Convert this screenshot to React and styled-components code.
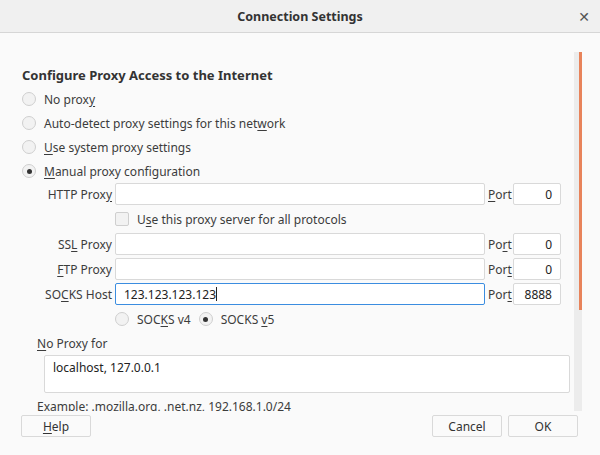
import React from "react";
import styled, { createGlobalStyle } from "styled-components";

const Global = createGlobalStyle`
  html, body { margin: 0; background: #fafafa; }
  body { font-family: "Noto Sans", "DejaVu Sans", sans-serif; font-size: 12px; color: #3c3c3c; }
`;

const Dialog = styled.div`
  width: 600px;
  height: 455px;
  display: flex;
  flex-direction: column;
  background: #fafafa;
`;

const TitleBar = styled.div`
  height: 32px;
  flex: none;
  display: flex;
  align-items: center;
  justify-content: center;
  background: #f0f0f0;
  border-bottom: 1px solid #d6d6d6;
  font-weight: bold;
  font-size: 12.5px;
  color: #333;
  position: relative;
`;

const Close = styled.span`
  position: absolute;
  right: 10px;
  top: 7px;
  font-size: 14px;
  color: #555;
`;

const Middle = styled.div`
  display: flex;
  height: 359px;
  flex: none;
  padding-top: 19px;
  overflow: hidden;
`;

const Content = styled.div`
  flex: 1;
  padding: 14px 0 0 22px;
`;

const Scrollbar = styled.div`
  width: 8px;
  margin-right: 18px;
  background: #ececec;
  display: flex;
  justify-content: flex-end;
`;

const Thumb = styled.div`
  width: 3px;
  height: 258px;
  background: #e8835a;
`;

const Heading = styled.div`
  font-weight: bold;
  font-size: 13px;
  line-height: 18px;
  color: #333;
  margin-bottom: 3px;
`;

const RadioRow = styled.label`
  display: flex;
  align-items: center;
  gap: 8px;
  height: 24px;
`;

const Radio = styled.span`
  width: 12px;
  height: 12px;
  border-radius: 50%;
  border: 1px solid #cfcfcf;
  background: #f2f2f2;
  display: flex;
  align-items: center;
  justify-content: center;
  flex: none;
  &::after {
    content: "";
    width: 5px;
    height: 5px;
    border-radius: 50%;
    background: ${(p) => (p.$on ? "#333" : "transparent")};
  }
`;

const Fields = styled.div`
  display: grid;
  grid-template-columns: 90px 370px 22px 48px;
  column-gap: 3px;
  row-gap: 3px;
  align-items: center;
`;

const Label = styled.span`
  text-align: right;
`;

const PortLabel = styled.span``;

const Input = styled.div`
  height: 20px;
  border: 1px solid ${(p) => (p.$focus ? "#3b8de0" : "#d9d9d9")};
  border-radius: 2px;
  background: #fff;
  padding: 0 8px;
  display: flex;
  align-items: center;
  justify-content: ${(p) => (p.$right ? "flex-end" : "flex-start")};
  color: #222;
  font-size: 12px;
`;

const Caret = styled.span`
  width: 1px;
  height: 14px;
  background: #222;
`;

const CheckRow = styled.div`
  grid-column: 2 / 5;
  display: flex;
  align-items: center;
  gap: 8px;
  height: 22px;
`;

const Check = styled.span`
  width: 12px;
  height: 12px;
  border: 1px solid #cfcfcf;
  background: #f2f2f2;
  border-radius: 2px;
`;

const SocksRow = styled.div`
  grid-column: 2 / 5;
  display: flex;
  align-items: center;
  gap: 8px;
  height: 22px;
`;

const Section = styled.div`
  padding-left: 15px;
  margin-top: 5px;
`;

const TextArea = styled.div`
  margin: 3px 0 0 7px;
  width: 508px;
  height: 30px;
  border: 1px solid #d9d9d9;
  border-radius: 2px;
  background: #fff;
  padding: 3px 8px;
  color: #222;
`;

const Hint = styled.div`
  margin-top: 5px;
`;

const Footer = styled.div`
  display: flex;
  padding: 4px 22px 0 21px;
  gap: 6px;
`;

const Button = styled.button`
  width: 70px;
  height: 22px;
  border: 1px solid #d9d9d9;
  border-radius: 2px;
  background: #fafafa;
  font: inherit;
  color: #333;
  margin-left: ${(p) => (p.$push ? "auto" : "0")};
`;

const U = styled.u`
  text-underline-offset: 2px;
`;

export default function App() {
  return (
    <Dialog>
      <Global />
      <TitleBar>
        Connection Settings
        <Close>✕</Close>
      </TitleBar>
      <Middle>
        <Content>
          <Heading>Configure Proxy Access to the Internet</Heading>
          <RadioRow><Radio /><span>No prox<U>y</U></span></RadioRow>
          <RadioRow><Radio /><span>Auto-detect proxy settings for this net<U>w</U>ork</span></RadioRow>
          <RadioRow><Radio /><span><U>U</U>se system proxy settings</span></RadioRow>
          <RadioRow><Radio $on /><span><U>M</U>anual proxy configuration</span></RadioRow>
          <Fields>
            <Label>HTTP Prox<U>y</U></Label>
            <Input />
            <PortLabel><U>P</U>ort</PortLabel>
            <Input $right>0</Input>
            <span />
            <CheckRow><Check /><span>U<U>s</U>e this proxy server for all protocols</span></CheckRow>
            <Label>SS<U>L</U> Proxy</Label>
            <Input />
            <PortLabel>Po<U>r</U>t</PortLabel>
            <Input $right>0</Input>
            <Label><U>F</U>TP Proxy</Label>
            <Input />
            <PortLabel>Por<U>t</U></PortLabel>
            <Input $right>0</Input>
            <Label>SO<U>C</U>KS Host</Label>
            <Input $focus>123.123.123.123<Caret /></Input>
            <PortLabel>Por<U>t</U></PortLabel>
            <Input $right>8888</Input>
            <span />
            <SocksRow>
              <RadioRow><Radio /><span>SOC<U>K</U>S v4</span></RadioRow>
              <RadioRow><Radio $on /><span>SOCKS <U>v</U>5</span></RadioRow>
            </SocksRow>
          </Fields>
          <Section>
            <div><U>N</U>o Proxy for</div>
            <TextArea>localhost, 127.0.0.1</TextArea>
            <Hint>Example: .mozilla.org, .net.nz, 192.168.1.0/24</Hint>
          </Section>
        </Content>
        <Scrollbar><Thumb /></Scrollbar>
      </Middle>
      <Footer>
        <Button><U>H</U>elp</Button>
        <Button $push>Cancel</Button>
        <Button>OK</Button>
      </Footer>
    </Dialog>
  );
}
